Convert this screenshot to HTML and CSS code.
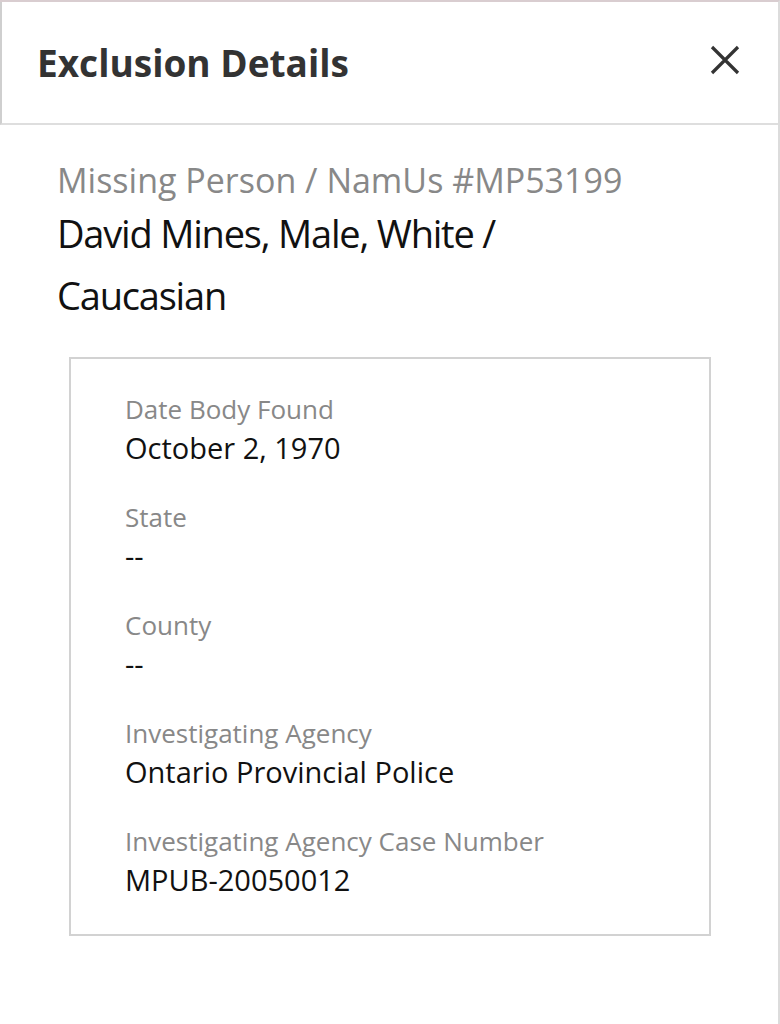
FILE: index.html
```html
<!DOCTYPE html>
<html>
<head>
<meta charset="utf-8">
<link rel="stylesheet" href="styles.css">
</head>
<body>
<div class="panel">
  <header class="header">
    <h1 class="title">Exclusion Details</h1>
    <button class="close" aria-label="Close">
      <svg width="30" height="30" viewBox="0 0 30 30"><path d="M2 2 L28 28 M28 2 L2 28" stroke="#333" stroke-width="3.2" stroke-linecap="butt" fill="none"/></svg>
    </button>
  </header>
  <main class="content">
    <div class="subtitle">Missing Person / NamUs #MP53199</div>
    <div class="name">David Mines, Male, White / Caucasian</div>
    <section class="box">
      <div class="field"><div class="label">Date Body Found</div><div class="value">October 2, 1970</div></div>
      <div class="field"><div class="label">State</div><div class="value">--</div></div>
      <div class="field"><div class="label">County</div><div class="value">--</div></div>
      <div class="field"><div class="label">Investigating Agency</div><div class="value">Ontario Provincial Police</div></div>
      <div class="field"><div class="label">Investigating Agency Case Number</div><div class="value">MPUB-20050012</div></div>
    </section>
  </main>
</div>
</body>
</html>
```
FILE: styles.css
```css
html, body {
  margin: 0;
  padding: 0;
  background: #fff;
}
body {
  font-family: "Open Sans", "Noto Sans", sans-serif;
}
.panel {
  width: 780px;
  height: 1024px;
  box-sizing: border-box;
  border-top: 2px solid #d9cdd0;
  border-right: 2px solid #dcdcdc;
}
.header {
  height: 123px;
  box-sizing: border-box;
  border-bottom: 2px solid #dedede;
  border-left: 2px solid #cfcfcf;
  display: flex;
  align-items: center;
  justify-content: space-between;
  padding: 0 38px 0 35px;
}
.title {
  margin: 0;
  font-size: 37px;
  font-weight: 700;
  color: #333;
  line-height: 44px;
}
.close {
  border: 0;
  background: none;
  padding: 0;
  width: 30px;
  height: 30px;
  display: flex;
  margin-top: -6px;
}
.content {
  padding: 33px 0 0 57px;
}
.subtitle {
  font-size: 34px;
  line-height: 44px;
  color: #888;
}
.name {
  width: 560px;
  font-size: 38px;
  letter-spacing: -1.2px;
  line-height: 62px;
  font-weight: 500;
  color: #111;
}
.box {
  margin: 31px 0 0 12px;
  width: 642px;
  height: 579px;
  box-sizing: border-box;
  border: 2px solid #d2d2d2;
  padding: 34px 0 0 54px;
  display: flex;
  flex-direction: column;
  gap: 30px;
}
.label {
  font-size: 26px;
  line-height: 32px;
  color: #888;
}
.value {
  font-size: 29px;
  line-height: 46px;
  color: #111;
}
```
